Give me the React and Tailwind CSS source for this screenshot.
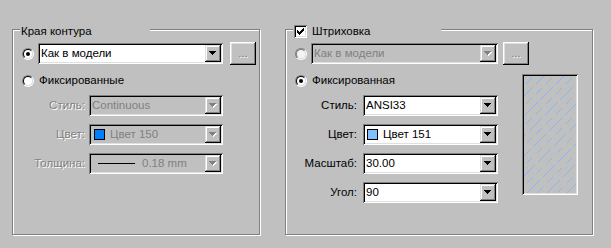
import React from "react";

function Arrow({ disabled }) {
  const d = "M0 0h7v1h-1v1h-1v1h-1v1h-1v-1h-1v-1h-1v-1h-1z";
  return (
    <svg width="8" height="5" viewBox="0 0 8 5" shapeRendering="crispEdges">
      {disabled && <path d={d} transform="translate(1 1)" fill="#ffffff" />}
      <path d={d} fill={disabled ? "#808080" : "#000000"} />
    </svg>
  );
}

function Radio({ checked, disabled }) {
  return (
    <div className="w-[12px] h-[12px] shrink-0 rounded-full border border-t-[#808080] border-l-[#808080] border-b-white border-r-white">
      <div
        className={
          disabled
            ? "w-full h-full rounded-full border border-t-[#808080] border-l-[#808080] border-b-[#dfdfdf] border-r-[#dfdfdf] bg-[#f4f4f4] flex items-center justify-center"
            : "w-full h-full rounded-full border border-t-black border-l-black border-b-[#dfdfdf] border-r-[#dfdfdf] bg-white flex items-center justify-center"
        }
      >
        {checked && <div className="w-[4px] h-[4px] rounded-full bg-black" />}
      </div>
    </div>
  );
}

function Checkbox() {
  return (
    <div className="w-[13px] h-[13px] shrink-0 bg-white shadow-[inset_1px_1px_0_#808080,inset_-1px_-1px_0_#fff,inset_2px_2px_0_#000,inset_-2px_-2px_0_#dfdfdf] flex items-center justify-center">
      <svg width="7" height="7" viewBox="0 0 7 7" shapeRendering="crispEdges">
        <path
          d="M0 2h1v1h1v1h1v-1h1v-1h1v-1h1v-1h1v3h-1v1h-1v1h-1v1h-1v1h-1v-1h-1v-1h-1v-1h-1z"
          fill="#000"
        />
      </svg>
    </div>
  );
}

function Combo({ className, disabled, children }) {
  return (
    <div
      className={
        (disabled
          ? "bg-[#c0c0c0] text-[#808080] "
          : "bg-white text-black ") +
        "h-[21px] flex items-center shrink-0 shadow-[inset_1px_1px_0_#808080,inset_-1px_-1px_0_#fff,inset_2px_2px_0_#000,inset_-2px_-2px_0_#dfdfdf] " +
        className
      }
    >
      <div className="flex-1 min-w-0 pl-[3px] flex items-center whitespace-nowrap overflow-hidden">
        {children}
      </div>
      <div className="w-[16px] h-[17px] mr-[2px] shrink-0 bg-[#c0c0c0] flex items-center justify-center shadow-[inset_-1px_-1px_0_#000,inset_1px_1px_0_#dfdfdf,inset_-2px_-2px_0_#808080,inset_2px_2px_0_#fff]">
        <Arrow disabled={disabled} />
      </div>
    </div>
  );
}

function DotsButton() {
  return (
    <div className="w-[26px] h-[23px] shrink-0 bg-[#c0c0c0] flex items-center justify-center text-[#808080] [text-shadow:1px_1px_0_#fff] shadow-[inset_-1px_-1px_0_#000,inset_1px_1px_0_#fff,inset_-2px_-2px_0_#808080,inset_2px_2px_0_#dfdfdf]">
      <span className="leading-none mt-[1px]">...</span>
    </div>
  );
}

function Swatch({ color }) {
  return (
    <div className={"w-[11px] h-[11px] shrink-0 border border-black mr-[5px] " + color} />
  );
}

function Hatch() {
  const W = 52;
  const H = 117;
  const lines = [];
  let i = 0;
  for (let c = -H; c < W + 14; c += 10) {
    lines.push(
      <line
        key={c}
        x1={c}
        y1={H}
        x2={c + H}
        y2={0}
        stroke="#88b6ee"
        strokeWidth="1"
        strokeDasharray={i % 2 === 0 ? "18 4" : "8 6"}
        shapeRendering="crispEdges"
      />
    );
    i++;
  }
  return (
    <div className="w-[56px] h-[121px] shrink-0 p-[2px] bg-[#c0c0c0] shadow-[inset_1px_1px_0_#808080,inset_-1px_-1px_0_#fff,inset_2px_2px_0_#000,inset_-2px_-2px_0_#dfdfdf]">
      <svg width={W} height={H} viewBox={`0 0 ${W} ${H}`} className="block">
        {lines}
      </svg>
    </div>
  );
}

export default function App() {
  return (
    <div className="w-[611px] h-[248px] bg-[#c0c0c0] font-['Liberation_Sans',Arial,sans-serif] text-[11.5px] text-black leading-none flex items-start pt-[29px] pl-[12px] overflow-hidden">
      {/* Left group */}
      <div className="relative w-[248px] h-[206px] shrink-0 border border-[#808080] shadow-[inset_1px_1px_0_#fff,1px_1px_0_#fff] flex flex-col">
        <div className="absolute left-[7px] top-[-5px] w-[130px] h-[13px] bg-[#c0c0c0] flex items-center pl-[1px]">
          Края контура
        </div>
        <div className="mt-[12px] h-[23px] flex items-center">
          <div className="ml-[9px]">
            <Radio checked />
          </div>
          <Combo className="ml-[4px] w-[185px]">Как в модели</Combo>
          <div className="ml-[7px]">
            <DotsButton />
          </div>
        </div>
        <div className="mt-[9px] h-[13px] flex items-center">
          <div className="ml-[9px]">
            <Radio />
          </div>
          <span className="ml-[5px]">Фиксированные</span>
        </div>
        <div className="mt-[8px] flex flex-col gap-[8px]">
          <div className="h-[21px] flex items-center">
            <div className="w-[72px] text-right text-[#808080] [text-shadow:1px_1px_0_#fff]">Стиль:</div>
            <Combo disabled className="ml-[4px] w-[134px]">Continuous</Combo>
          </div>
          <div className="h-[21px] flex items-center">
            <div className="w-[72px] text-right text-[#808080] [text-shadow:1px_1px_0_#fff]">Цвет:</div>
            <Combo disabled className="ml-[4px] w-[134px]">
              <div className="ml-[2px] flex items-center">
                <Swatch color="bg-[#0080ff]" />
                <span>Цвет 150</span>
              </div>
            </Combo>
          </div>
          <div className="h-[21px] flex items-center">
            <div className="w-[72px] text-right text-[#808080] [text-shadow:1px_1px_0_#fff]">Толщина:</div>
            <Combo disabled className="ml-[4px] w-[134px]">
              <div className="ml-[6px] flex items-center">
                <div className="w-[37px] h-[1px] bg-black mr-[7px]" />
                <span>0.18 mm</span>
              </div>
            </Combo>
          </div>
        </div>
      </div>

      {/* Right group */}
      <div className="relative ml-[25px] w-[308px] h-[206px] shrink-0 border border-[#808080] shadow-[inset_1px_1px_0_#fff,1px_1px_0_#fff] flex flex-col">
        <div className="absolute left-[7px] top-[-5px] w-[148px] h-[13px] bg-[#c0c0c0] flex items-center pl-[1px]">
          <Checkbox />
          <span className="ml-[5px]">Штриховка</span>
        </div>
        <div className="mt-[12px] h-[23px] flex items-center">
          <div className="ml-[9px]">
            <Radio disabled />
          </div>
          <Combo disabled className="ml-[4px] w-[187px]">Как в модели</Combo>
          <div className="ml-[5px]">
            <DotsButton />
          </div>
        </div>
        <div className="flex items-start">
          <div className="flex flex-col w-[212px]">
            <div className="mt-[9px] h-[13px] flex items-center">
              <div className="ml-[9px]">
                <Radio checked />
              </div>
              <span className="ml-[5px]">Фиксированная</span>
            </div>
            <div className="mt-[8px] flex flex-col gap-[8px]">
              <div className="h-[21px] flex items-center">
                <div className="w-[71px] text-right">Стиль:</div>
                <Combo className="ml-[6px] w-[135px]">ANSI33</Combo>
              </div>
              <div className="h-[21px] flex items-center">
                <div className="w-[71px] text-right">Цвет:</div>
                <Combo className="ml-[6px] w-[135px]">
                  <div className="ml-[1px] flex items-center">
                    <Swatch color="bg-[#80c0ff]" />
                    <span>Цвет 151</span>
                  </div>
                </Combo>
              </div>
              <div className="h-[21px] flex items-center">
                <div className="w-[71px] text-right">Масштаб:</div>
                <Combo className="ml-[6px] w-[135px]">30.00</Combo>
              </div>
              <div className="h-[21px] flex items-center">
                <div className="w-[71px] text-right">Угол:</div>
                <Combo className="ml-[6px] w-[135px]">90</Combo>
              </div>
            </div>
          </div>
          <div className="ml-[24px] mt-[9px]">
            <Hatch />
          </div>
        </div>
      </div>
    </div>
  );
}
